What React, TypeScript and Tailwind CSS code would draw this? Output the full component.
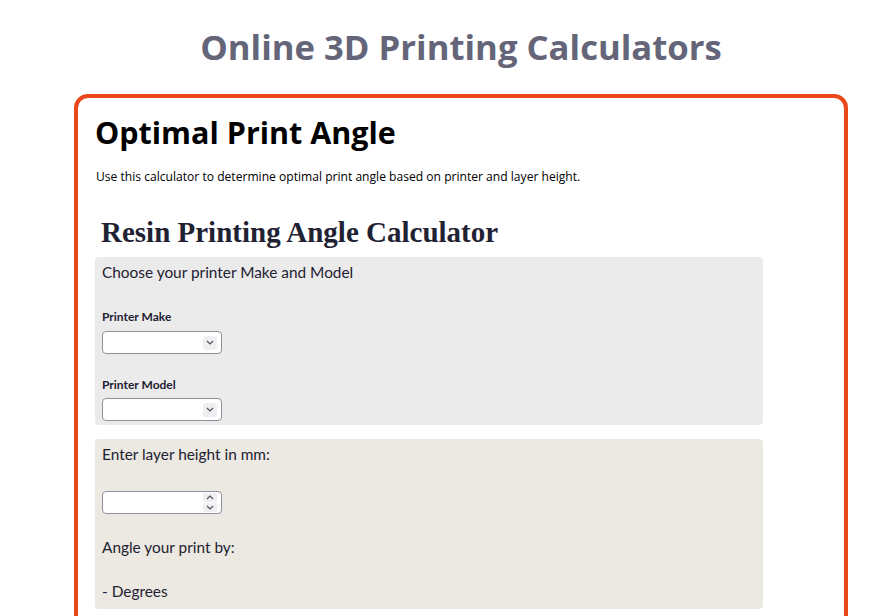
function Chevron({ up = false }: { up?: boolean }) {
  return (
    <svg width="8" height="5" viewBox="0 0 8 5" className={up ? "rotate-180" : ""}>
      <path d="M1 1l3 3 3-3" fill="none" stroke="#4b4b55" strokeWidth="1.1" />
    </svg>
  );
}

function FakeSelect() {
  return (
    <div className="flex h-[23px] w-[120px] items-center justify-end rounded-[4px] border border-[#8f8f9d] bg-white pr-[4px]">
      <div className="flex h-[14px] w-[14px] items-center justify-center rounded-[3px] bg-[#efeff2]">
        <Chevron />
      </div>
    </div>
  );
}

function FakeNumber() {
  return (
    <div className="flex h-[23px] w-[120px] items-center justify-end rounded-[4px] border border-[#8f8f9d] bg-white pr-[4px]">
      <div className="flex flex-col gap-[1px]">
        <div className="flex h-[9px] w-[14px] items-center justify-center rounded-[2px] bg-[#efeff2]">
          <Chevron up />
        </div>
        <div className="flex h-[9px] w-[14px] items-center justify-center rounded-[2px] bg-[#efeff2]">
          <Chevron />
        </div>
      </div>
    </div>
  );
}

export default function App() {
  const body = { fontFamily: "Lato, 'Open Sans', sans-serif" };
  return (
    <div className="min-h-screen bg-white" style={{ fontFamily: "'Open Sans', sans-serif" }}>
      <h1 className="pl-[40px] pt-[22px] text-center text-[34.7px] font-bold leading-[49px] text-[#656579]">
        Online 3D Printing Calculators
      </h1>

      <div className="ml-[74px] mt-[23px] w-[774px] rounded-[14px] border-4 border-[#e9481a] pb-10 pl-[17px] pt-[16px]">
        <h2 className="text-[30.5px] font-bold leading-[36px] text-black">Optimal Print Angle</h2>
        <p className="ml-[1px] mt-[18px] text-[12.1px] leading-[18px] text-black">
          Use this calculator to determine optimal print angle based on printer and layer height.
        </p>

        <h3
          className="ml-[6px] mt-[29px] text-[29px] font-bold leading-[34px] text-[#1f2233]"
          style={{ fontFamily: "'Liberation Serif', serif" }}
        >
          Resin Printing Angle Calculator
        </h3>

        <div className="mt-[8px] w-[668px] rounded-[4px] bg-[#ebebeb] px-[7px] pb-[4px] pt-[3px] text-[#1f2233]" style={body}>
          <p className="text-[15.4px] leading-[24px]">Choose your printer Make and Model</p>
          <p className="mt-[24px] text-[12px] font-bold leading-[18px]">Printer Make</p>
          <div className="mt-[5px]">
            <FakeSelect />
          </div>
          <p className="mt-[22px] text-[12px] font-bold leading-[18px]">Printer Model</p>
          <div className="mt-[4px]">
            <FakeSelect />
          </div>
        </div>

        <div className="mt-[14px] w-[668px] rounded-[4px] bg-[#ebe9e1] px-[7px] pb-[6px] pt-[3px] text-[#1f2233]" style={body}>
          <p className="text-[15.4px] leading-[24px]">Enter layer height in mm:</p>
          <div className="mt-[25px]">
            <FakeNumber />
          </div>
          <p className="mt-[21px] text-[15.4px] leading-[24px]">Angle your print by:</p>
          <p className="mt-[20px] text-[15.4px] leading-[24px]">- Degrees</p>
        </div>
      </div>
    </div>
  );
}
